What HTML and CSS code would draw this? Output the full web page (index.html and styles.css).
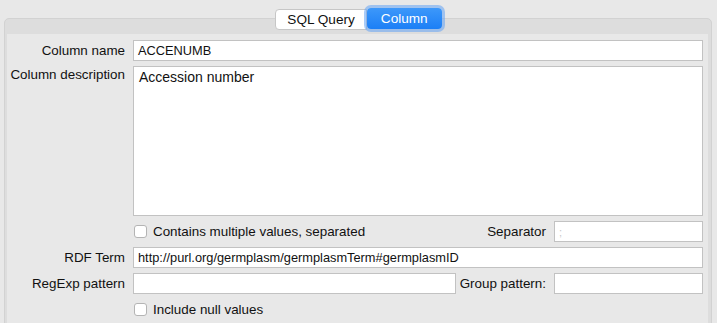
FILE: index.html
```html
<!DOCTYPE html>
<html lang="en">
<head>
  <meta charset="UTF-8">
  <title>Column</title>
  <link rel="stylesheet" href="styles.css">
</head>
<body>
  <div class="tabbar">
    <span class="seg">SQL Query</span>
    <span class="seg active">Column</span>
  </div>

  <div class="panel">
    <div class="form">
      <label class="lbl">Column name</label>
      <div class="field wide">ACCENUMB</div>

      <label class="lbl top">Column description</label>
      <div class="field wide area">Accession number</div>

      <div class="check"><i class="box"></i>Contains multiple values, separated</div>
      <label class="lbl">Separator</label>
      <div class="field placeholder">;</div>

      <label class="lbl">RDF Term</label>
      <div class="field wide">http://purl.org/germplasm/germplasmTerm#germplasmID</div>

      <label class="lbl">RegExp pattern</label>
      <div class="field"></div>
      <label class="lbl">Group pattern:</label>
      <div class="field"></div>

      <div class="check"><i class="box"></i>Include null values</div>
    </div>
  </div>
</body>
</html>
```

FILE: styles.css
```css
body {
  margin: 0;
  background: #e8e8e8;
  font-family: "Liberation Sans", Arial, sans-serif;
  font-size: 13.4px;
  color: #111;
}

.tabbar {
  display: flex;
  justify-content: center;
  padding-top: 9px;
  height: 20px;
  position: relative;
  z-index: 1;
}

.seg {
  display: flex;
  align-items: center;
  height: 19px;
  padding: 0 11px;
  background: #fff;
  border: 1px solid #c6c6c6;
  border-radius: 4px 0 0 4px;
  font-size: 13.6px;
  color: #111;
}

.seg.active {
  height: 21px;
  margin-top: -1px;
  padding: 0 14px;
  color: #fff;
  border: 0;
  border-radius: 4px;
  background: linear-gradient(#3d98fa, #1c7ff6);
  box-shadow: 0 0 0 3px rgba(98, 163, 244, 0.55);
}

.panel {
  margin: -11px 5px 0 4px;
  padding: 15px 3px 0 2px;
  background: #dddddd;
  border: 1px solid #d2d2d2;
  border-radius: 5px 5px 0 0;
}

.form {
  display: grid;
  grid-template-columns: 118px 1fr 82px 149px;
  grid-auto-rows: 21px;
  grid-template-rows: 21px 150px;
  column-gap: 8px;
  row-gap: 5px;
  padding: 6px 5px 4px 0;
  background: #e8e8e8;
}

.lbl {
  display: flex;
  align-items: center;
  justify-content: flex-end;
  white-space: nowrap;
  color: #111;
}

.lbl.top {
  align-items: flex-start;
  padding-top: 1px;
}

.field {
  display: flex;
  align-items: center;
  padding: 0 4px;
  background: #fff;
  border: 1px solid #c2c2c2;
  font-size: 12.8px;
  white-space: nowrap;
  overflow: hidden;
}

.field.wide {
  grid-column: 2 / 5;
}

.field.area {
  align-items: flex-start;
  padding: 2px 5px;
  font-size: 14px;
}

.placeholder {
  color: #c8c8c8;
  font-size: 11px;
}

.check {
  grid-column: 2;
  display: flex;
  align-items: center;
  gap: 6px;
  padding-left: 1px;
}

.box {
  width: 13px;
  height: 13px;
  background: #fff;
  border: 1px solid #b4b4b4;
  border-radius: 3px;
  box-sizing: border-box;
}
```
